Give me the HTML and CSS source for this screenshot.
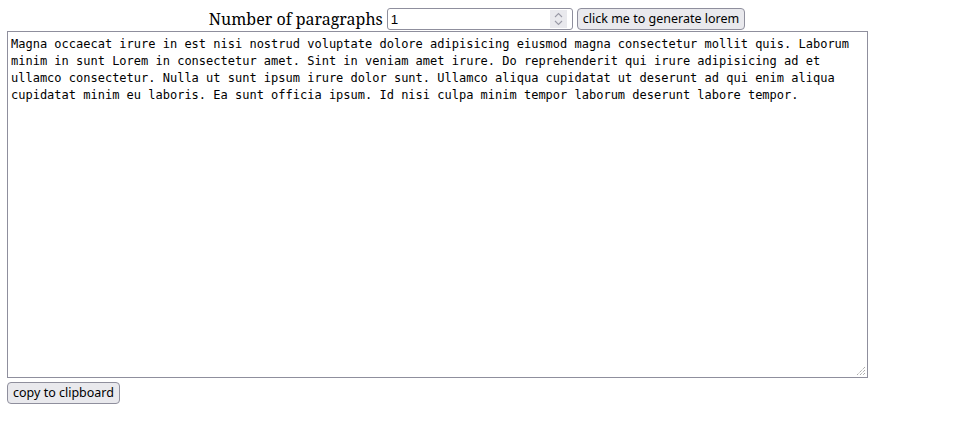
FILE: index.html
```html
<!DOCTYPE html>
<html>
<head>
<meta charset="utf-8">
<link rel="stylesheet" href="styles.css">
</head>
<body>
<div class="controls">
<label class="label" for="count">Number of paragraphs</label>
<span class="number">
<input id="count" class="count" type="text" value="1">
<span class="spin">
<svg width="9" height="14" viewBox="0 0 9 14"><path d="M1 5 L4.5 1.5 L8 5 M1 9 L4.5 12.5 L8 9" fill="none" stroke="#9a9aa6" stroke-width="1.1"/></svg>
</span>
</span>
<button class="btn">click me to generate lorem</button>
</div>
<textarea class="output" rows="20">Magna occaecat irure in est nisi nostrud voluptate dolore adipisicing eiusmod magna consectetur mollit quis. Laborum minim in sunt Lorem in consectetur amet. Sint in veniam amet irure. Do reprehenderit qui irure adipisicing ad et ullamco consectetur. Nulla ut sunt ipsum irure dolor sunt. Ullamco aliqua cupidatat ut deserunt ad qui enim aliqua cupidatat minim eu laboris. Ea sunt officia ipsum. Id nisi culpa minim tempor laborum deserunt labore tempor.</textarea>
<div class="footer">
<button class="btn">copy to clipboard</button>
</div>
</body>
</html>
```
FILE: styles.css
```css
body {
  margin: 7px;
  font-family: "Noto Serif", "DejaVu Serif", serif;
  font-size: 16px;
}
.controls {
  display: flex;
  justify-content: center;
  align-items: center;
  gap: 4px;
  height: 24px;
}
.label {
  line-height: 22px;
}
.number {
  display: inline-flex;
  align-items: center;
  width: 184px;
  height: 20px;
  border: 1px solid #8f8f9d;
  border-radius: 3px;
  background: #fff;
  box-sizing: content-box;
}
.count {
  flex: 1;
  min-width: 0;
  border: none;
  outline: none;
  padding: 0 0 0 3px;
  font-family: "Liberation Sans", Arial, sans-serif;
  font-size: 13.33px;
  color: #000;
  background: transparent;
}
.spin {
  display: flex;
  align-items: center;
  justify-content: center;
  width: 17px;
  height: 18px;
  margin-right: 5px;
  background: #e9e9ed;
}
.btn {
  font-family: "Noto Sans", "Open Sans", sans-serif;
  font-size: 12.5px;
  color: #000;
  background: #e9e9ed;
  border: 1px solid #8f8f9d;
  border-radius: 4px;
  padding: 0 5px;
  height: 22px;
  line-height: 18px;
}
.output {
  display: block;
  box-sizing: border-box;
  width: 861px;
  height: 347px;
  margin: 0;
  padding: 4px 3px 2px;
  border: 1px solid #8f8f9d;
  font-family: "DejaVu Sans Mono", monospace;
  font-size: 12px;
  line-height: 17px;
  color: #000;
  resize: none;
  background-color: #fff;
  background-image: url("data:image/svg+xml;utf8,<svg xmlns='http://www.w3.org/2000/svg' width='11' height='11'><path d='M10 2 L2 10 M10 5 L5 10 M10 8 L8 10' stroke='%23888' stroke-width='1' stroke-dasharray='1 1'/></svg>");
  background-repeat: no-repeat;
  background-position: right 1px bottom 1px;
}
.footer {
  margin-top: 2px;
}
```
